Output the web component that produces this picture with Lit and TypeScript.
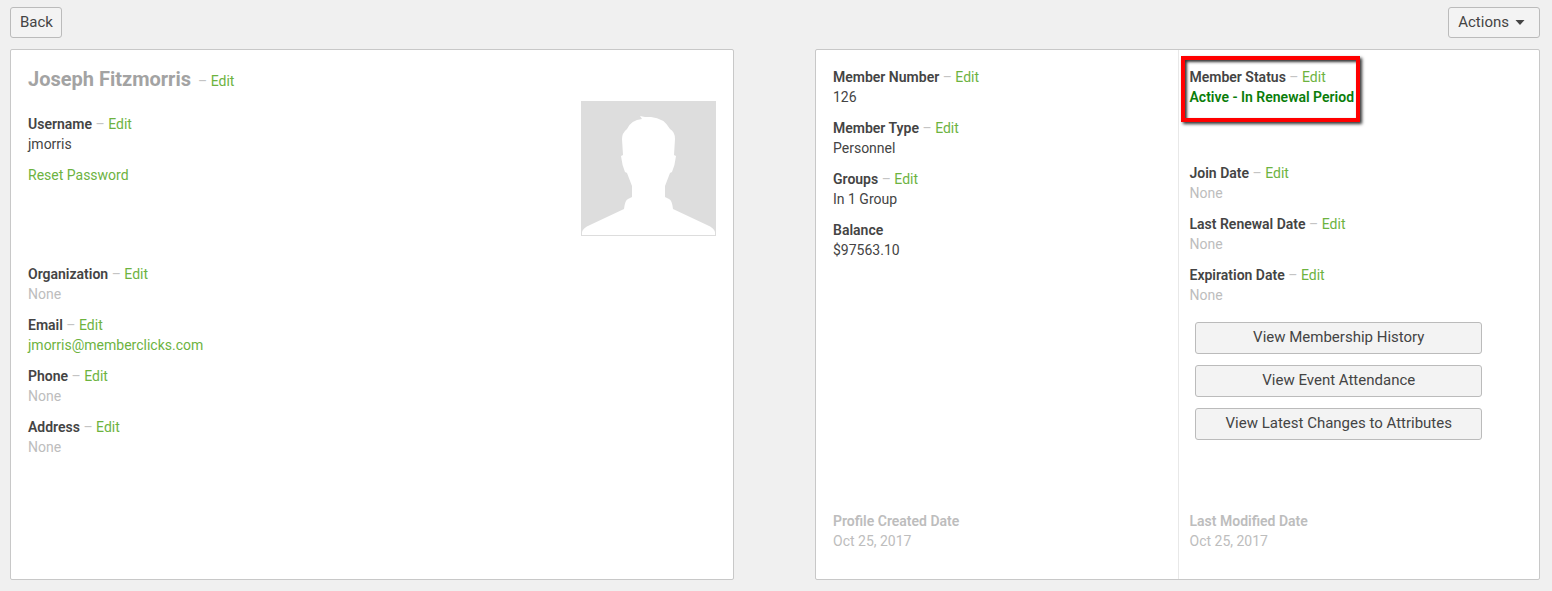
import { LitElement, html, css, svg, nothing } from "lit";
import { customElement, property } from "lit/decorators.js";

@customElement("profile-field")
export class ProfileField extends LitElement {
  @property() label = "";
  @property() value = "";
  @property() href = "";
  @property({ type: Boolean }) editable = false;
  @property() tone = "normal";

  static styles = css`
    :host {
      display: block;
      line-height: 20px;
    }
    .label {
      font-weight: 600;
    }
    .dash {
      color: #c4c4c4;
    }
    a {
      color: #6db33f;
      text-decoration: none;
    }
    a:hover {
      text-decoration: underline;
    }
    .empty .value,
    .muted {
      color: #bdbdbd;
    }
    .active .value {
      color: #0a7d0a;
      font-weight: 600;
      white-space: nowrap;
    }
  `;

  render() {
    return html`
      <div class=${this.tone}>
        <div>
          <span class="label">${this.label}</span>
          ${this.editable
            ? html`<span class="dash">–</span>
                <a href="#edit" aria-label="Edit ${this.label}">Edit</a>`
            : nothing}
        </div>
        <div class="value">
          ${this.href ? html`<a href=${this.href}>${this.value}</a>` : this.value}
        </div>
      </div>
    `;
  }
}

const avatar = svg`
  <rect width="135" height="135" fill="#ddd" />
  <path fill="#fff" d="M1 134 V131 Q2 127 9 124 L43 108 Q44 99 47 98 L51 96 V85
    L46 72 L44 71 Q41 64 40 55 L42 54 L41 38 Q41 32 46 28 Q50 19 61 18 L59 15
    L64 16 H70 Q83 17 89 28 Q94 31 94 38 L93 54 L95 55 Q94 64 91 71 L89 72
    L84 85 V96 L88 98 Q91 99 92 108 L126 124 Q133 127 134 131 V134 Z" />
`;

@customElement("app-root")
export class AppRoot extends LitElement {
  static styles = css`
    :host {
      display: block;
      box-sizing: border-box;
      min-height: 100vh;
      padding: 7px 12px 11px 10px;
      background: #f0f0f0;
      color: #444;
      font: 14px/20px Roboto, sans-serif;
    }
    .toolbar {
      display: flex;
      justify-content: space-between;
      margin-bottom: 11px;
    }
    button {
      box-sizing: border-box;
      height: 31px;
      padding: 0 8px 2px 9px;
      border: 1px solid #bbb;
      border-radius: 3px;
      background: #f3f3f3;
      color: #444;
      font: 15px/20px Roboto, sans-serif;
      cursor: pointer;
    }
    .menu {
      display: flex;
      align-items: center;
      gap: 6px;
      padding-right: 14px;
    }
    .caret {
      width: 10px;
      height: 5px;
      margin-top: 2px;
      fill: #444;
    }
    .cards {
      display: grid;
      grid-template-columns: 724fr 725fr;
      gap: 81px;
    }
    .card {
      display: flex;
      border: 1px solid #c8c8c8;
      border-radius: 2px;
      background: #fff;
    }
    .person {
      justify-content: space-between;
      padding: 17px 17px 28px 17px;
    }
    .stack {
      display: flex;
      flex-direction: column;
      gap: 11px;
    }
    .name {
      display: flex;
      align-items: baseline;
      gap: 7px;
      margin-bottom: 12px;
    }
    h1 {
      margin: 0;
      color: #a3a3a3;
      font-size: 20px;
      line-height: 24px;
    }
    .dash {
      color: #c4c4c4;
    }
    a {
      color: #6db33f;
      text-decoration: none;
    }
    .account {
      min-height: 139px;
    }
    .photo {
      flex: none;
      width: 135px;
      height: 135px;
      margin-top: 34px;
    }
    .pane {
      box-sizing: border-box;
      width: 50%;
      padding: 17px 17px 28px 17px;
    }
    .pane + .pane {
      padding-left: 11px;
      border-left: 1px solid #e8e8e8;
    }
    .status {
      position: relative;
      align-self: flex-start;
      min-height: 85px;
    }
    .highlight {
      position: absolute;
      top: -11px;
      left: -9px;
      right: -6px;
      height: 66px;
      box-sizing: border-box;
      border: 4px solid #f00;
      box-shadow: 2px 2px 3px #333, inset 2px 2px 3px #333;
      pointer-events: none;
    }
    .reports {
      display: flex;
      flex-direction: column;
      gap: 11px;
      margin: 6px 40px 60px 5px;
    }
    .reports button {
      height: 32px;
    }
    .stamp {
      margin-top: auto;
    }
  `;

  render() {
    return html`
      <nav class="toolbar">
        <button type="button">Back</button>
        <button type="button" class="menu" aria-haspopup="menu">
          Actions
          <svg class="caret" viewBox="0 0 10 5" aria-hidden="true">
            <path d="M0.5 0h9L5 5z" />
          </svg>
        </button>
      </nav>
      <main class="cards">
        <section class="card person">
          <div class="stack">
            <div class="name">
              <h1>Joseph Fitzmorris</h1>
              <div><span class="dash">–</span> <a href="#edit-name">Edit</a></div>
            </div>
            <div class="stack account">
              <profile-field label="Username" value="jmorris" editable></profile-field>
              <div><a href="#reset">Reset Password</a></div>
            </div>
            <profile-field label="Organization" value="None" tone="empty" editable></profile-field>
            <profile-field
              label="Email"
              value="jmorris@memberclicks.com"
              href="mailto:jmorris@memberclicks.com"
              editable
            ></profile-field>
            <profile-field label="Phone" value="None" tone="empty" editable></profile-field>
            <profile-field label="Address" value="None" tone="empty" editable></profile-field>
          </div>
          <svg class="photo" viewBox="0 0 135 135" role="img" aria-label="Profile photo">
            ${avatar}
          </svg>
        </section>
        <section class="card">
          <div class="pane stack">
            <profile-field label="Member Number" value="126" editable></profile-field>
            <profile-field label="Member Type" value="Personnel" editable></profile-field>
            <profile-field label="Groups" value="In 1 Group" editable></profile-field>
            <profile-field label="Balance" value="$97563.10"></profile-field>
            <profile-field
              class="stamp"
              label="Profile Created Date"
              value="Oct 25, 2017"
              tone="muted"
            ></profile-field>
          </div>
          <div class="pane stack">
            <div class="status">
              <profile-field
                label="Member Status"
                value="Active - In Renewal Period"
                tone="active"
                editable
              ></profile-field>
              <div class="highlight"></div>
            </div>
            <profile-field label="Join Date" value="None" tone="empty" editable></profile-field>
            <profile-field label="Last Renewal Date" value="None" tone="empty" editable></profile-field>
            <profile-field label="Expiration Date" value="None" tone="empty" editable></profile-field>
            <div class="reports">
              <button type="button">View Membership History</button>
              <button type="button">View Event Attendance</button>
              <button type="button">View Latest Changes to Attributes</button>
            </div>
            <profile-field
              class="stamp"
              label="Last Modified Date"
              value="Oct 25, 2017"
              tone="muted"
            ></profile-field>
          </div>
        </section>
      </main>
    `;
  }
}
